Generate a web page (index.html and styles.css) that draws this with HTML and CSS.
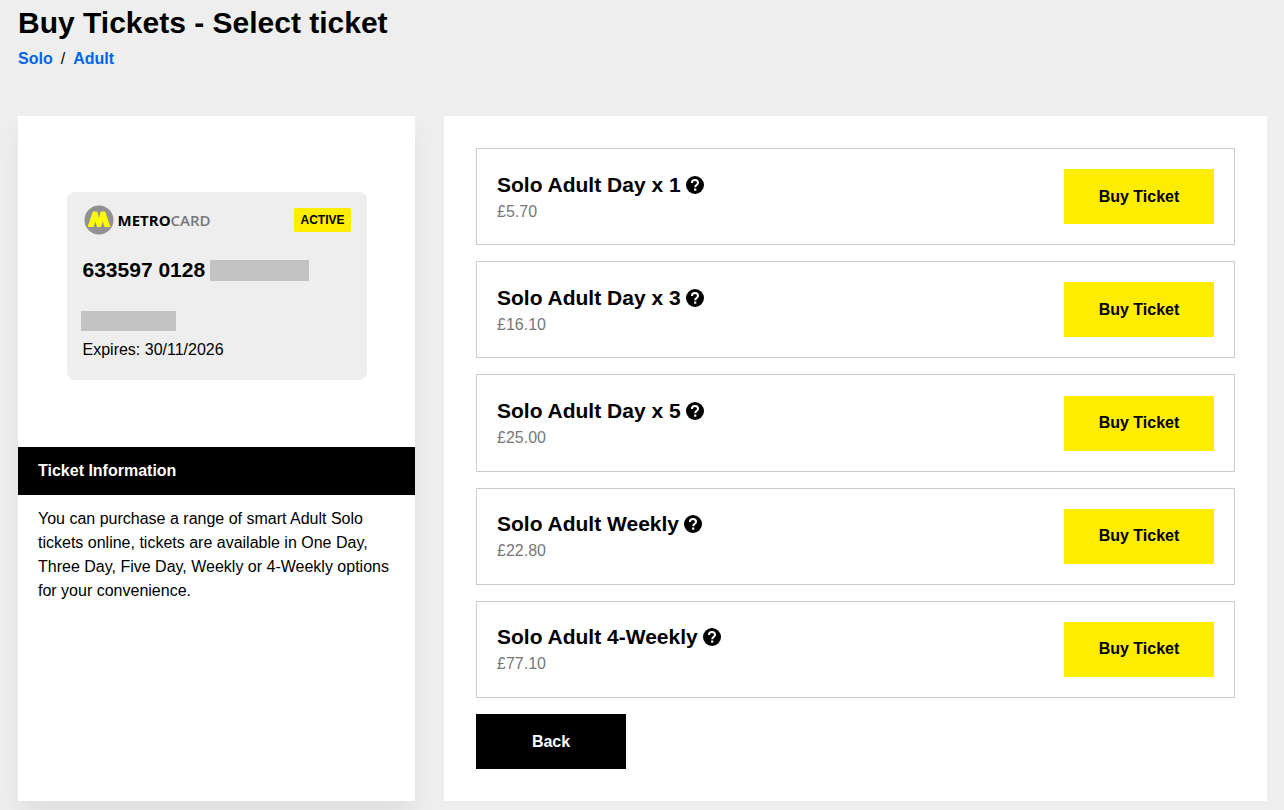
FILE: index.html
```html
<!DOCTYPE html>
<html lang="en">
<head>
<meta charset="utf-8">
<title>Buy Tickets - Select ticket</title>
<link rel="stylesheet" href="styles.css">
</head>
<body>
<svg class="sprite" aria-hidden="true">
  <symbol id="help" viewBox="0 0 18 18">
    <circle cx="9" cy="9" r="9" fill="#000"/>
    <path d="M5.900 7.100C5.900 5 7.100 4 9 4S12 5.200 12 6.900C12 8.700 9.200 8.800 9.200 11.300" fill="none" stroke="#fff" stroke-width="2"/>
    <rect x="8.100" y="12.500" width="2.200" height="2.200" fill="#fff"/>
  </symbol>
</svg>
<div class="page">
  <header class="page-header">
    <h1 class="title">Buy Tickets - Select ticket</h1>
    <nav class="crumbs" aria-label="Breadcrumb">
      <a class="crumb" href="#solo">Solo</a>
      <span>/</span>
      <a class="crumb" href="#adult">Adult</a>
    </nav>
  </header>
  <main class="columns">
    <aside class="side">
      <div class="card-area">
        <section class="card" aria-label="Metrocard">
          <div class="card-top">
            <div class="brand">
              <svg class="brand-mark" viewBox="0 0 30 30" aria-hidden="true">
                <circle cx="15" cy="15" r="14.500" fill="#919195"/>
                <path d="M3.600 22L8.400 7.500Q8.700 6.500 9.800 6.500H12.300Q13.300 6.500 13.600 7.500L15 13L16.400 7.500Q16.700 6.500 17.700 6.500H20.200Q21.300 6.500 21.600 7.500L26.400 22H20.400L18.800 16.500L17 22H13L11.200 16.500L9.600 22Z" fill="#fcfc08"/>
              </svg>
              <span class="brand-name">METRO<span class="brand-tail">CARD</span></span>
            </div>
            <span class="badge">ACTIVE</span>
          </div>
          <div class="number"><span>633597 0128</span><span class="mask mask-number"></span></div>
          <div class="mask mask-name"></div>
          <div class="expires">Expires: 30/11/2026</div>
        </section>
      </div>
      <h2 class="info-title">Ticket Information</h2>
      <p class="info-text">You can purchase a range of smart Adult Solo tickets online, tickets are available in One Day, Three Day, Five Day, Weekly or 4-Weekly options for your convenience.</p>
    </aside>
    <section class="panel">
      <ul class="tickets">
        <li class="ticket">
          <div><h3 class="ticket-name">Solo Adult Day x 1<button class="help" aria-label="About Solo Adult Day x 1"><svg class="help-icon"><use href="#help"/></svg></button></h3><div class="price">£5.70</div></div>
          <button class="btn btn-buy">Buy Ticket</button>
        </li>
        <li class="ticket">
          <div><h3 class="ticket-name">Solo Adult Day x 3<button class="help" aria-label="About Solo Adult Day x 3"><svg class="help-icon"><use href="#help"/></svg></button></h3><div class="price">£16.10</div></div>
          <button class="btn btn-buy">Buy Ticket</button>
        </li>
        <li class="ticket">
          <div><h3 class="ticket-name">Solo Adult Day x 5<button class="help" aria-label="About Solo Adult Day x 5"><svg class="help-icon"><use href="#help"/></svg></button></h3><div class="price">£25.00</div></div>
          <button class="btn btn-buy">Buy Ticket</button>
        </li>
        <li class="ticket">
          <div><h3 class="ticket-name">Solo Adult Weekly<button class="help" aria-label="About Solo Adult Weekly"><svg class="help-icon"><use href="#help"/></svg></button></h3><div class="price">£22.80</div></div>
          <button class="btn btn-buy">Buy Ticket</button>
        </li>
        <li class="ticket">
          <div><h3 class="ticket-name">Solo Adult 4-Weekly<button class="help" aria-label="About Solo Adult 4-Weekly"><svg class="help-icon"><use href="#help"/></svg></button></h3><div class="price">£77.10</div></div>
          <button class="btn btn-buy">Buy Ticket</button>
        </li>
      </ul>
      <button class="btn btn-back">Back</button>
    </section>
  </main>
</div>
</body>
</html>
```
FILE: styles.css
```css
* { box-sizing: border-box; }
body {
  margin: 0;
  background: #eee;
  color: #000;
  font: 16px/24px "Liberation Sans", Arial, sans-serif;
}
h1, h2, h3, p, ul { margin: 0; padding: 0; }
button { margin: 0; padding: 0; border: 0; border-radius: 0; color: inherit; cursor: pointer; }
.sprite { display: none; }
.page {
  display: flex;
  flex-direction: column;
  min-height: 100vh;
  padding: 3px 17px 9px 18px;
}
.page-header { margin-bottom: 45px; }
.title { font-size: 30px; line-height: 40px; }
.crumbs { display: flex; gap: 8px; padding-top: 4px; }
.crumb { color: #0066e6; font-weight: 700; text-decoration: none; }
.columns {
  flex: 1;
  display: grid;
  grid-template-columns: repeat(12, 1fr);
  column-gap: 29px;
}
.side {
  grid-column: span 4;
  background: #fff;
  box-shadow: 0 16px 24px rgba(0, 0, 0, .06);
}
.card-area { display: flex; justify-content: center; padding: 76px 20px 67px; }
.card {
  width: 300px;
  padding: 13px 16px 18px;
  border-radius: 8px;
  background: #eee;
}
.card-top { display: flex; justify-content: space-between; align-items: center; }
.brand { display: flex; align-items: center; gap: 4px; padding-left: 1px; }
.brand-mark { width: 30px; height: 30px; }
.brand-name { font: 700 15px/24px "Open Sans", sans-serif; }
.brand-tail { color: #77777a; font-weight: 600; }
.badge {
  padding: 0 6px;
  border-radius: 2px;
  background: #ffed00;
  font-size: 12px;
  font-weight: 700;
}
.number {
  display: flex;
  align-items: center;
  gap: 5px;
  margin-top: 19px;
  font-size: 21px;
  line-height: 32px;
  font-weight: 700;
}
.mask { background: #c3c3c3; }
.mask-number { width: 99px; height: 21px; }
.mask-name { width: 95px; height: 20px; margin: 25px 0 7px -2px; }
.expires { line-height: 24px; }
.info-title {
  padding: 12px 20px;
  background: #000;
  color: #fff;
  font-size: 16px;
  line-height: 24px;
}
.info-text { padding: 12px 20px; }
.panel {
  grid-column: span 8;
  display: flex;
  flex-direction: column;
  gap: 16px;
  padding: 32px;
  background: #fff;
}
.tickets { flex: 1; display: flex; flex-direction: column; gap: 16px; list-style: none; }
.ticket {
  flex: 1;
  display: flex;
  justify-content: space-between;
  align-items: center;
  padding: 20px;
  border: 1px solid #ccc;
}
.ticket-name { display: flex; align-items: center; gap: 5px; font-size: 21px; line-height: 30px; }
.help { display: flex; background: none; }
.help-icon { width: 18px; height: 18px; }
.price { color: #777; }
.btn { width: 150px; height: 55px; font: 700 16px/24px "Liberation Sans", Arial, sans-serif; }
.btn-buy { background: #ffed00; }
.btn-back { background: #000; color: #fff; }
```
